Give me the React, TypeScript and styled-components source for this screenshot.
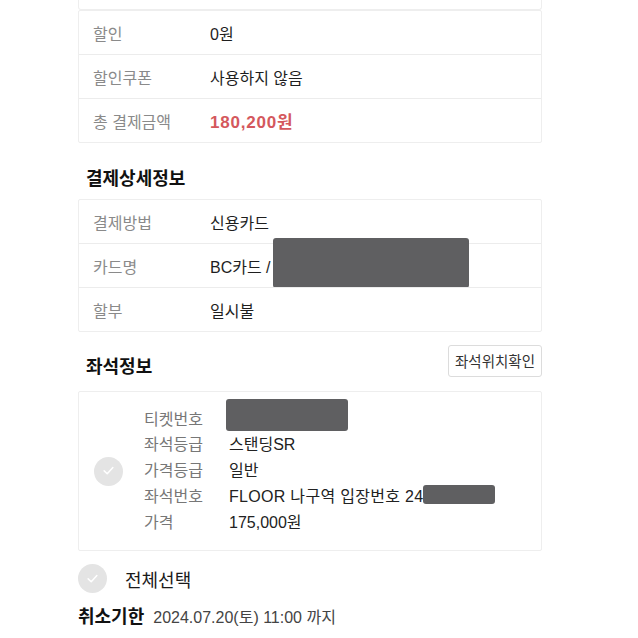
import React from "react";
import styled, { createGlobalStyle } from "styled-components";

const GlobalStyle = createGlobalStyle`
  body {
    margin: 0;
    background: #fff;
    font-family: "Liberation Sans", "Noto Sans CJK KR", sans-serif;
    color: #222;
  }
`;

const Page = styled.div`
  width: 638px;
  height: 638px;
  overflow: hidden;
  box-sizing: border-box;
  padding: 0 96px 0 78px;
  display: flex;
  flex-flow: column nowrap;
`;

const PrevCard = styled.div`
  height: 10px;
  box-sizing: border-box;
  border: 1px solid #eeeeee;
  border-top: 0;
  border-radius: 0 0 3px 3px;
`;

const Table = styled.div<{ mt?: number }>`
  display: flex;
  flex-flow: column nowrap;
  margin-top: ${(p) => p.mt ?? 0}px;
  border: 1px solid #eeeeee;
  border-radius: 2px;
`;

const Row = styled.div`
  display: flex;
  flex-flow: row nowrap;
  align-items: center;
  height: 43px;
  padding-left: 14px;
  & + & {
    border-top: 1px solid #ececec;
  }
`;

const Label = styled.span`
  width: 117px;
  font-size: 16px;
  color: #8a8a8a;
`;

const Value = styled.span<{ red?: boolean }>`
  display: flex;
  align-items: center;
  font-size: ${(p) => (p.red ? 17 : 16)}px;
  letter-spacing: ${(p) => (p.red ? 0.8 : 0)}px;
  color: ${(p) => (p.red ? "#d4585d" : "#1e1e1e")};
  font-weight: ${(p) => (p.red ? 700 : 400)};
`;

const Redact = styled.span<{ w: number; h: number }>`
  display: inline-block;
  width: ${(p) => p.w}px;
  height: ${(p) => p.h}px;
  background: #5f5f61;
  border-radius: 3px;
`;

const SectionHead = styled.div<{ mt: number }>`
  display: flex;
  flex-flow: row nowrap;
  justify-content: space-between;
  align-items: center;
  margin-top: ${(p) => p.mt}px;
  padding-left: 8px;
  height: 34px;
`;

const SectionTitle = styled.h2`
  margin: 0;
  font-size: 18px;
  font-weight: 700;
  color: #111;
`;

const SeatButton = styled.button`
  height: 32px;
  margin-bottom: 9px;
  padding: 0 6px;
  border: 1px solid #dcdcdc;
  border-radius: 3px;
  background: #fff;
  font-family: "Liberation Sans", "Noto Sans CJK KR", sans-serif;
  font-size: 14.5px;
  color: #333;
`;

const SeatCard = styled.div`
  display: flex;
  flex-flow: row nowrap;
  align-items: center;
  margin-top: 9px;
  height: 160px;
  box-sizing: border-box;
  border: 1px solid #eeeeee;
  border-radius: 2px;
  padding-left: 15px;
`;

const SeatRows = styled.div`
  display: grid;
  grid-template-columns: 85px auto;
  grid-auto-rows: 25.75px;
  align-items: center;
  margin-left: 21px;
  margin-top: -4px;
`;

const SeatLabel = styled.span`
  font-size: 16px;
  color: #777;
`;

const SeatValue = styled.span<{ wide?: boolean }>`
  display: flex;
  align-items: center;
  font-size: 16px;
  letter-spacing: ${(p) => (p.wide ? 0.3 : 0)}px;
  color: #222;
`;

const CheckCircle = styled.span<{ size: number }>`
  display: inline-flex;
  align-items: center;
  justify-content: center;
  flex: none;
  width: ${(p) => p.size}px;
  height: ${(p) => p.size}px;
  border-radius: 50%;
  background: #e4e4e4;
`;

const SelectAll = styled.div`
  display: flex;
  flex-flow: row nowrap;
  align-items: center;
  gap: 18px;
  margin-top: 13px;
  font-size: 18px;
  color: #1a1a1a;
`;

const Deadline = styled.div`
  display: flex;
  flex-flow: row nowrap;
  align-items: baseline;
  gap: 9px;
  margin-top: 9px;
`;

const DeadlineTitle = styled.span`
  font-size: 18px;
  font-weight: 700;
  color: #111;
`;

const DeadlineDate = styled.span`
  font-size: 16px;
  color: #444;
`;

const Check = ({ size }: { size: number }) => (
  <CheckCircle size={size}>
    <svg width={size * 0.45} height={size * 0.45} viewBox="0 0 12 12">
      <path d="M2 6.3 L4.8 9 L10 3.2" fill="none" stroke="#fff" strokeWidth="1.4" strokeLinecap="round" strokeLinejoin="round" />
    </svg>
  </CheckCircle>
);

const App = () => (
  <Page>
    <GlobalStyle />
    <PrevCard />
    <Table>
      <Row>
        <Label>할인</Label>
        <Value>0원</Value>
      </Row>
      <Row>
        <Label>할인쿠폰</Label>
        <Value>사용하지 않음</Value>
      </Row>
      <Row>
        <Label>총 결제금액</Label>
        <Value red>180,200원</Value>
      </Row>
    </Table>

    <SectionHead mt={17}>
      <SectionTitle>결제상세정보</SectionTitle>
    </SectionHead>
    <Table mt={5}>
      <Row>
        <Label>결제방법</Label>
        <Value>신용카드</Value>
      </Row>
      <Row>
        <Label>카드명</Label>
        <Value>
          BC카드 /
          <Redact w={196} h={50} style={{ marginLeft: 2, marginTop: -5 }} />
        </Value>
      </Row>
      <Row>
        <Label>할부</Label>
        <Value>일시불</Value>
      </Row>
    </Table>

    <SectionHead mt={16}>
      <SectionTitle>좌석정보</SectionTitle>
      <SeatButton>좌석위치확인</SeatButton>
    </SectionHead>
    <SeatCard>
      <Check size={29} />
      <SeatRows>
        <SeatLabel>티켓번호</SeatLabel>
        <SeatValue>
          <Redact w={122} h={32} style={{ marginLeft: -3, marginTop: -6 }} />
        </SeatValue>
        <SeatLabel>좌석등급</SeatLabel>
        <SeatValue>스탠딩SR</SeatValue>
        <SeatLabel>가격등급</SeatLabel>
        <SeatValue>일반</SeatValue>
        <SeatLabel>좌석번호</SeatLabel>
        <SeatValue wide>
          FLOOR 나구역 입장번호 24
          <Redact w={72} h={19} />
        </SeatValue>
        <SeatLabel>가격</SeatLabel>
        <SeatValue>175,000원</SeatValue>
      </SeatRows>
    </SeatCard>

    <SelectAll>
      <Check size={29} />
      전체선택
    </SelectAll>

    <Deadline>
      <DeadlineTitle>취소기한</DeadlineTitle>
      <DeadlineDate>2024.07.20(토) 11:00 까지</DeadlineDate>
    </Deadline>
  </Page>
);

export default App;
